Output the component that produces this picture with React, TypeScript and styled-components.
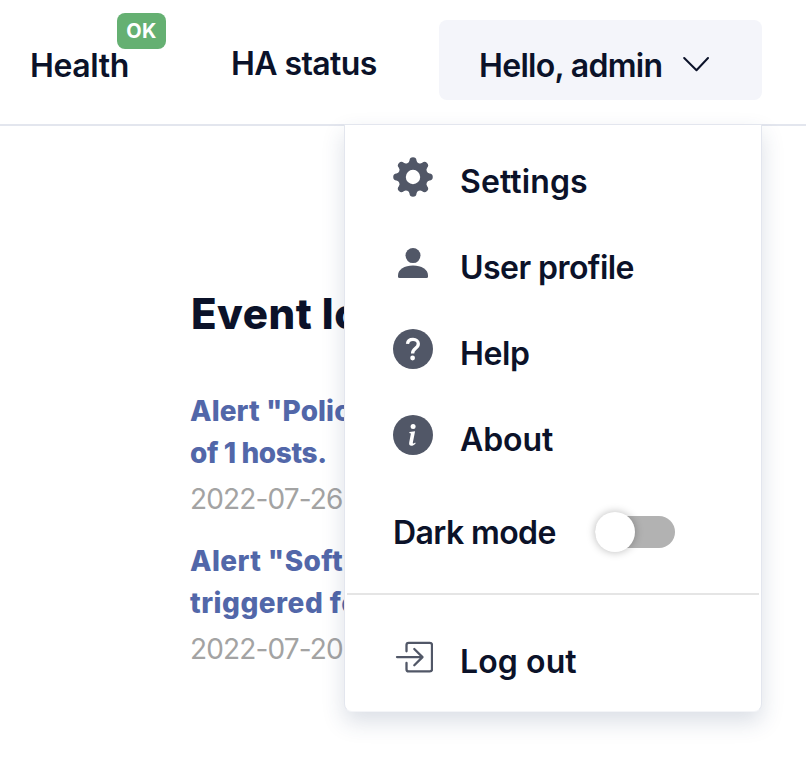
import React from "react";
import styled, { createGlobalStyle } from "styled-components";

const GlobalStyle = createGlobalStyle`
  * { box-sizing: border-box; }
  body {
    margin: 0;
    background: #fff;
    color: #0b1229;
    font-family: Inter, "Open Sans", sans-serif;
    overflow: hidden;
  }
`;

const Page = styled.div`
  width: 806px;
  height: 768px;
  overflow: hidden;
`;

const Header = styled.header`
  display: flex;
  align-items: flex-start;
  height: 126px;
  border-bottom: 2px solid #e3e6ee;
`;

const Label = styled.span<{ $track?: number }>`
  font-size: 32px;
  font-weight: 600;
  line-height: 40px;
  white-space: nowrap;
  letter-spacing: ${(p) => p.$track ?? 0}px;
`;

const NavItem = styled.a<{ $width: number; $top: number; $left: number }>`
  position: relative;
  display: block;
  flex: none;
  width: ${(p) => p.$width}px;
  margin-left: ${(p) => p.$left}px;
  padding-top: ${(p) => p.$top}px;
`;

const Badge = styled.span`
  position: absolute;
  top: 13px;
  left: 87px;
  width: 49px;
  height: 36px;
  border-radius: 8px;
  background: #65b072;
  color: #fff;
  font-size: 20px;
  font-weight: 700;
  line-height: 36px;
  letter-spacing: 0.4px;
  text-align: center;
`;

const UserMenu = styled.div`
  position: relative;
  flex: none;
  margin: 20px 0 0 59px;
`;

const UserButton = styled.button`
  display: flex;
  align-items: flex-start;
  width: 323px;
  height: 80px;
  padding: 26px 0 0 40px;
  border: 0;
  border-radius: 8px;
  background: #f4f5fa;
  color: inherit;
  font-family: inherit;
  text-align: left;
`;

const ButtonText = styled.span`
  width: 204px;
  display: flex;
`;

const Chevron = styled.svg`
  margin-top: 8px;
`;

const Dropdown = styled.div`
  position: absolute;
  top: 104px;
  right: 0;
  width: 418px;
  height: 588px;
  padding-top: 9px;
  border: 1px solid #e3e6ee;
  border-bottom-color: #f4f5f8;
  border-radius: 0 0 8px 8px;
  background: #fff;
  box-shadow: 0 10px 22px rgba(40, 66, 104, 0.17);
`;

const MenuRow = styled.div`
  display: flex;
  align-items: center;
  height: 86px;
  padding-left: 48px;
`;

const MenuText = styled.span`
  display: flex;
  padding: 10px 0 0 27px;
`;

const MenuIcon = styled.svg`
  display: block;
  flex: none;
  color: #515767;
`;

const ModeRow = styled.div`
  display: flex;
  align-items: center;
  height: 108px;
  padding-left: 48px;
`;

const ModeText = styled.span`
  display: flex;
  width: 202px;
  padding-top: 2px;
`;

const Switch = styled.span`
  display: flex;
  align-items: center;
  width: 80px;
  height: 32px;
  border-radius: 16px;
  background: #b2b2b2;
`;

const Knob = styled.span`
  flex: none;
  width: 40px;
  height: 40px;
  border-radius: 50%;
  background: #fff;
  box-shadow: 0 0 8px rgba(0, 0, 0, 0.28);
`;

const Divider = styled.hr`
  height: 2px;
  margin: 7px 2px 19px;
  border: 0;
  background: #e5e5e5;
`;

const Main = styled.main`
  padding: 162px 0 0 190px;
  white-space: nowrap;
`;

const Title = styled.h1`
  margin: 0 0 50px 1px;
  font-size: 42px;
  font-weight: 850;
  line-height: 52px;
  letter-spacing: 0.5px;
`;

const Event = styled.article`
  height: 150px;
`;

const EventLine = styled.div<{ $track: number }>`
  color: #5267a9;
  font-size: 28px;
  font-weight: 800;
  line-height: 42px;
  letter-spacing: ${(p) => p.$track}px;
`;

const EventDate = styled.time`
  display: block;
  color: #a3a3a3;
  font-size: 28px;
  line-height: 50px;
  letter-spacing: -0.85px;
`;

const gearPoint = (radius: number, degrees: number) => {
  const a = (degrees * Math.PI) / 180;
  return `${(20 + radius * Math.cos(a)).toFixed(2)} ${(20 + radius * Math.sin(a)).toFixed(2)}`;
};

// Eight rounded teeth joined by concave arcs, with a round hub cut out.
const gearPath =
  `M${gearPoint(16.9, -12)}` +
  Array.from({ length: 8 }, (_, i) => {
    const t = i * 45;
    return `A3.52 3.52 0 0 1 ${gearPoint(16.9, t + 12)}A3.6 3.6 0 0 0 ${gearPoint(16.9, t + 33)}`;
  }).join("") +
  "ZM27.2 20A7.2 7.2 0 1 0 12.8 20A7.2 7.2 0 1 0 27.2 20Z";

const icons = {
  settings: <path d={gearPath} fill="currentColor" fillRule="evenodd" />,
  user: (
    <g fill="currentColor">
      <circle cx="20" cy="12.6" r="7.5" />
      <path d="M5 32.5C5 26.5 11.5 22.6 20 22.6S35 26.5 35 32.5V33.5Q35 35 33.5 35H6.500Q5 35 5 33.500Z" />
    </g>
  ),
  help: (
    <>
      <circle cx="20" cy="20" r="20" fill="currentColor" />
      <path d="M14.500 14.900C14.800 11.900 17 10.400 20 10.400C23.300 10.400 25.300 12.300 25.300 14.800C25.300 17 24.300 18.100 22.500 19.400C20.600 20.800 19.600 21.600 19.600 24.500" fill="none" stroke="#fff" strokeWidth="3.300" />
      <circle cx="19.600" cy="29" r="2.400" fill="#fff" />
    </>
  ),
  about: (
    <>
      <circle cx="20" cy="20" r="20" fill="currentColor" />
      <circle cx="20.100" cy="11.400" r="2.500" fill="#fff" />
      <path d="M16.500 16.900L22.100 16.200L19.900 27.200C19.600 28.800 20.300 28.700 22.300 27.500L22.500 28.700C19.700 31.500 15.400 31.700 16.200 27.500L17.900 18.500L16.300 18.100Z" fill="#fff" />
    </>
  ),
  logout: (
    <g fill="none" stroke="currentColor" strokeWidth="2.300" strokeLinecap="round" strokeLinejoin="round">
      <path d="M13.500 14.300V8Q13.500 5.800 15.700 5.800H36.800Q39 5.800 39 8V32.200Q39 34.400 36.800 34.400H15.700Q13.500 34.400 13.500 32.200V26" />
      <path d="M4 20.100H29.500M21.300 12L29.500 20.100L21.300 28.200" />
    </g>
  ),
};

function Item({ icon, text, track }: { icon: keyof typeof icons; text: string; track: number }) {
  return (
    <MenuRow>
      <MenuIcon width="40" height="40" viewBox="0 0 40 40">{icons[icon]}</MenuIcon>
      <MenuText><Label $track={track}>{text}</Label></MenuText>
    </MenuRow>
  );
}

export default function App() {
  return (
    <Page>
      <GlobalStyle />
      <Header>
        <NavItem $left={30} $top={46} $width={136}>
          <Label $track={-0.4}>Health</Label>
          <Badge>OK</Badge>
        </NavItem>
        <NavItem $left={65} $top={44} $width={149}>
          <Label $track={-0.6}>HA status</Label>
        </NavItem>
        <UserMenu>
          <UserButton>
            <ButtonText><Label $track={-0.7}>Hello, admin</Label></ButtonText>
            <Chevron width="28" height="20" viewBox="0 0 28 20">
              <path d="M1.200 4L13.500 16.300L25 4" fill="none" stroke="#0b1229" strokeWidth="2" strokeLinecap="round" strokeLinejoin="round" />
            </Chevron>
          </UserButton>
          <Dropdown>
            <Item icon="settings" text="Settings" track={0.1} />
            <Item icon="user" text="User profile" track={-0.55} />
            <Item icon="help" text="Help" track={-0.4} />
            <Item icon="about" text="About" track={-0.1} />
            <ModeRow>
              <ModeText><Label $track={-0.6}>Dark mode</Label></ModeText>
              <Switch><Knob /></Switch>
            </ModeRow>
            <Divider />
            <Item icon="logout" text="Log out" track={0.1} />
          </Dropdown>
        </UserMenu>
      </Header>
      <Main>
        <Title>Event log</Title>
        <Event>
          <EventLine $track={0.1}>Alert "Policy</EventLine>
          <EventLine $track={-0.4}>of 1 hosts.</EventLine>
          <EventDate>2022-07-26</EventDate>
        </Event>
        <Event>
          <EventLine $track={0.4}>Alert "Software</EventLine>
          <EventLine $track={0.5}>triggered for</EventLine>
          <EventDate>2022-07-20</EventDate>
        </Event>
      </Main>
    </Page>
  );
}
